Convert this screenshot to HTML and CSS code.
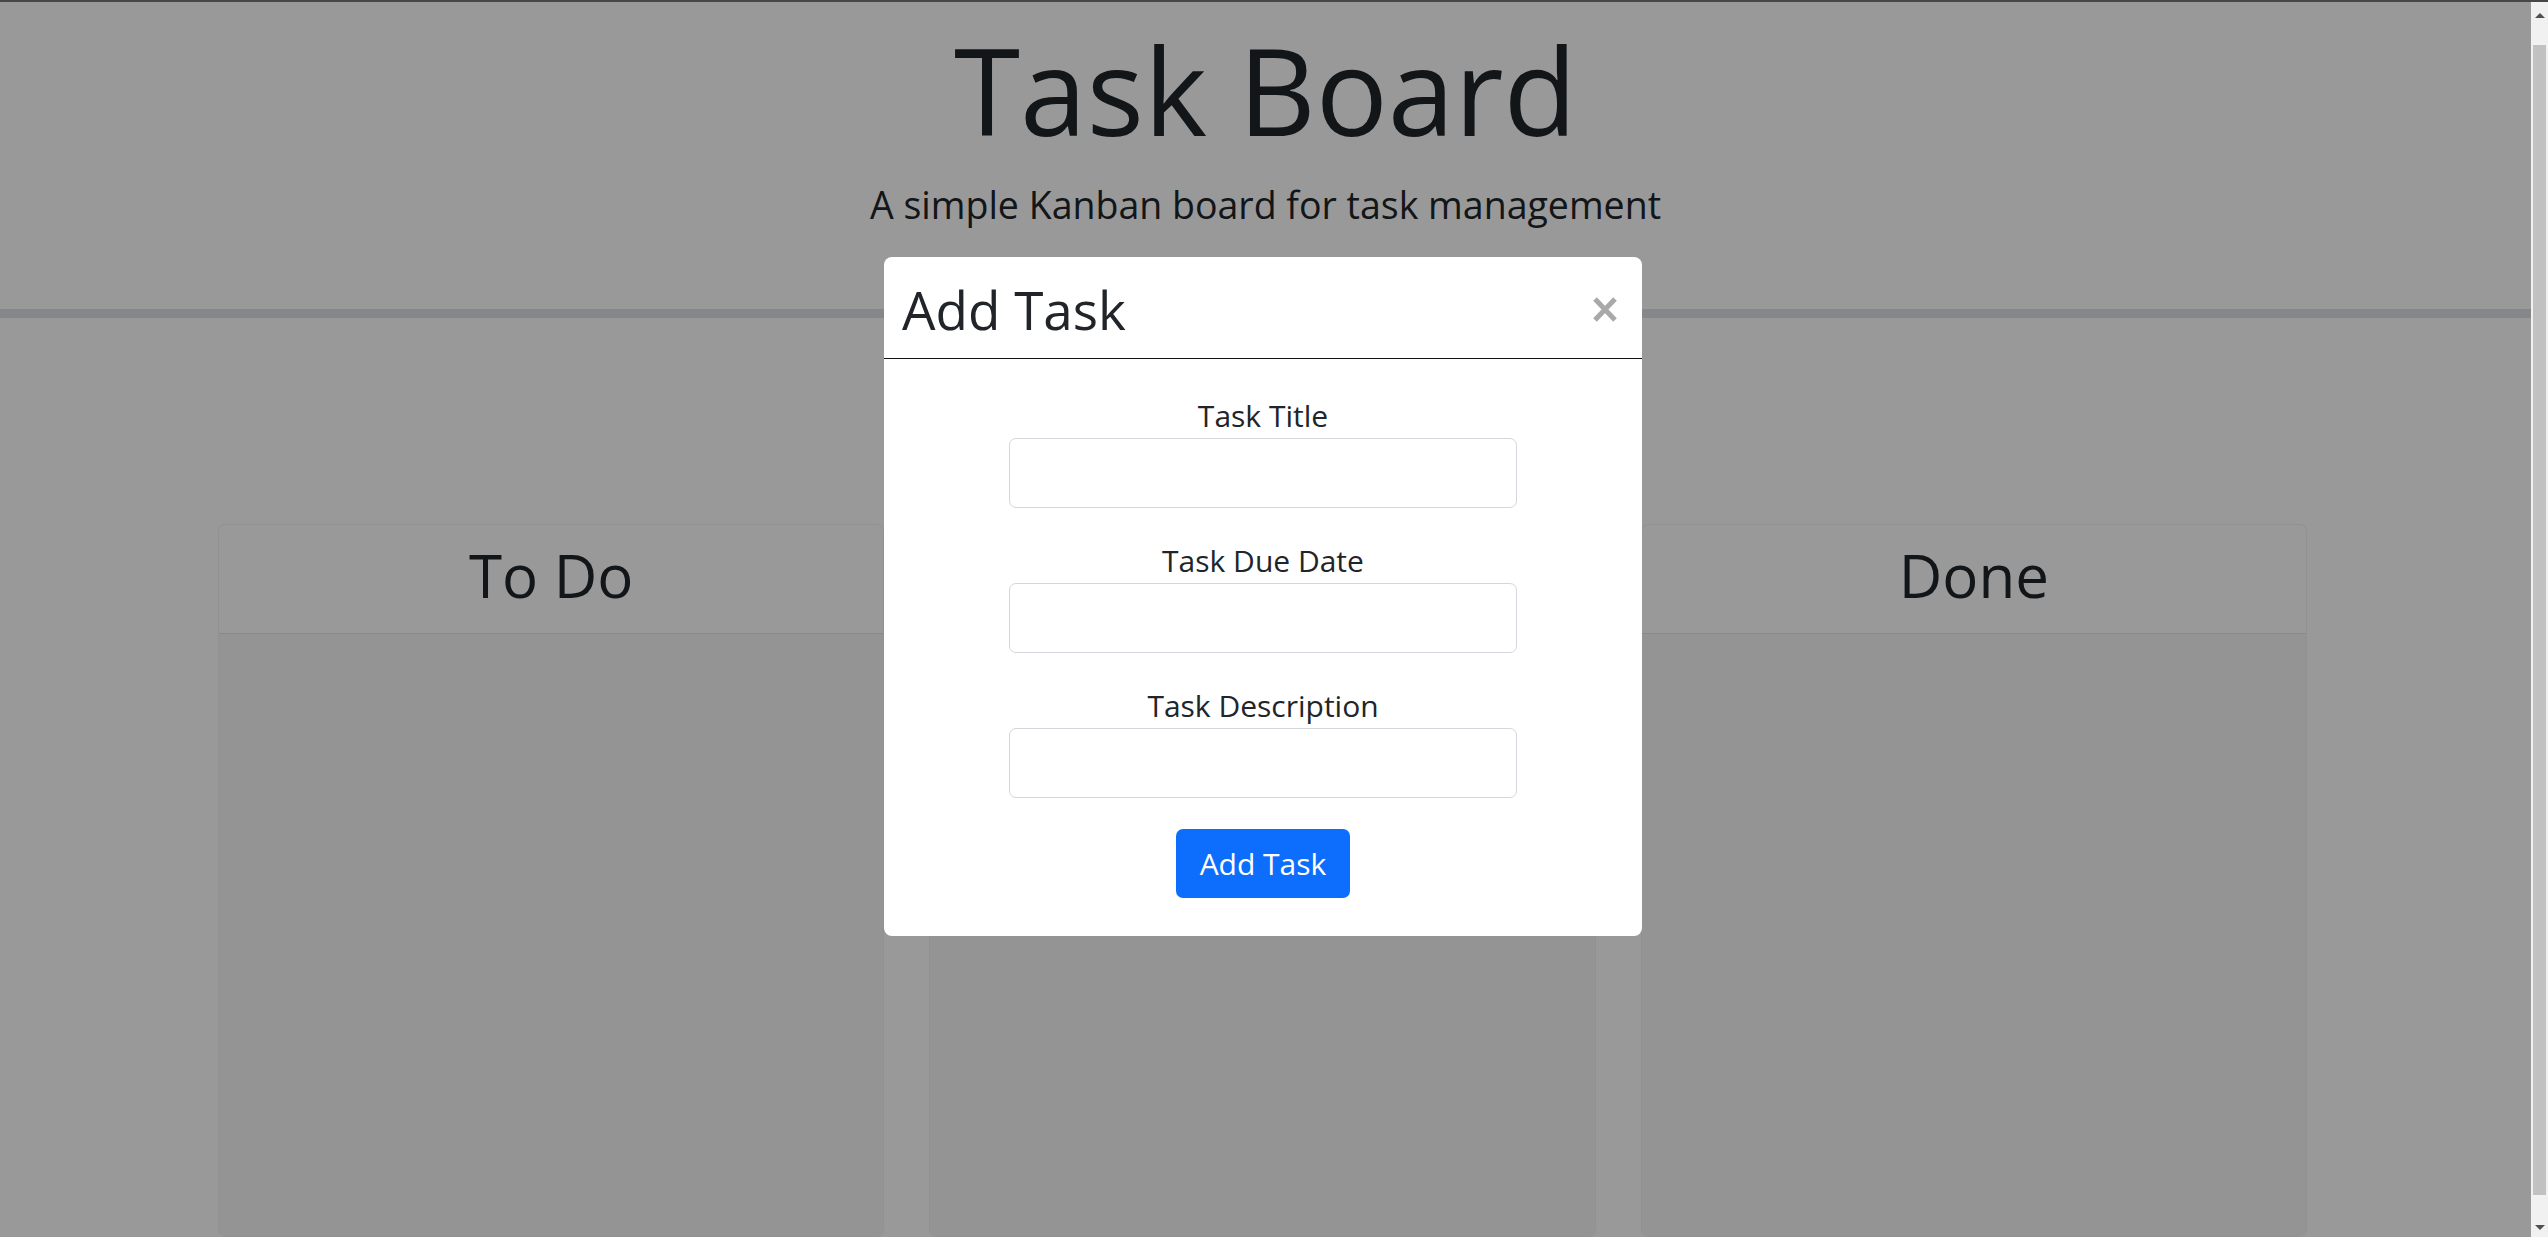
FILE: index.html
```html
<!DOCTYPE html>
<html lang="en">
<head>
<meta charset="utf-8">
<title>Task Board</title>
<link rel="stylesheet" href="styles.css">
</head>
<body>
<div class="window-line"></div>
<div class="window">
  <div class="page">
    <header class="site-header">
      <h1 class="site-title">Task Board</h1>
      <p class="site-subtitle">A simple Kanban board for task management</p>
    </header>
    <main class="board">
      <section class="lane">
        <div class="lane-header"><h2 class="lane-title">To Do</h2></div>
        <div class="lane-body"></div>
      </section>
      <section class="lane">
        <div class="lane-header"><h2 class="lane-title">In Progress</h2></div>
        <div class="lane-body"></div>
      </section>
      <section class="lane">
        <div class="lane-header"><h2 class="lane-title">Done</h2></div>
        <div class="lane-body"></div>
      </section>
    </main>
    <div class="backdrop"></div>
    <div class="modal">
      <div class="modal-header">
        <h2 class="modal-title">Add Task</h2>
        <button class="modal-close" type="button" aria-label="Close">
          <svg width="26" height="25" viewBox="0 0 26 25"><path d="M3 2 L23 23 M23 2 L3 23" stroke="#a9a9a9" stroke-width="5" fill="none"/></svg>
        </button>
      </div>
      <form class="modal-body">
        <div class="field">
          <label class="field-label" for="title">Task Title</label>
          <input class="field-input" id="title" type="text">
        </div>
        <div class="field">
          <label class="field-label" for="due">Task Due Date</label>
          <input class="field-input" id="due" type="text">
        </div>
        <div class="field">
          <label class="field-label" for="desc">Task Description</label>
          <input class="field-input" id="desc" type="text">
        </div>
        <button class="btn-primary" type="button">Add Task</button>
      </form>
    </div>
  </div>
  <div class="scrollbar">
    <div class="sb-arrow sb-up"></div>
    <div class="sb-thumb"></div>
    <div class="sb-track"></div>
    <div class="sb-arrow sb-down"></div>
  </div>
</div>
</body>
</html>
```
FILE: styles.css
```css
* { box-sizing: border-box; }
html, body {
  margin: 0;
  height: 100%;
  overflow: hidden;
}
body {
  display: flex;
  flex-direction: column;
  font-family: "Open Sans", "Noto Sans", sans-serif;
  color: #212529;
  background: #fff;
}
.window-line {
  height: 2px;
  background: #474747;
  flex: none;
}
.window {
  flex: 1;
  display: flex;
  min-height: 0;
}
.page {
  flex: 1;
  position: relative;
  overflow: hidden;
  background: #fff;
}
.site-header {
  text-align: center;
  padding: 15px 0 78px;
  border-bottom: 9px solid #dee2e6;
}
.site-title {
  margin: 0;
  font-size: 120px;
  font-weight: 400;
  line-height: 146px;
}
.site-subtitle {
  margin: 16px 0 0;
  font-size: 37.5px;
  line-height: 52px;
}
.board {
  width: 2089px;
  margin: 206px 0 0 218px;
  display: grid;
  grid-template-columns: repeat(3, 1fr);
  gap: 45px;
}
.lane {
  border: 1px solid #f2f2f2;
  border-radius: 7px;
  background: #fff;
  display: flex;
  flex-direction: column;
}
.lane-header {
  padding: 14px 0 22px;
  text-align: center;
  border-bottom: 1px solid #e4e4e4;
}
.lane-title {
  margin: 0;
  font-size: 60px;
  font-weight: 400;
  line-height: 72px;
}
.lane-body {
  height: 602px;
  background: #f7f7f7;
  border-radius: 0 0 7px 7px;
}
.backdrop {
  position: absolute;
  inset: 0;
  background: rgba(0, 0, 0, 0.4);
}
.modal {
  position: absolute;
  top: 255px;
  left: 884px;
  width: 758px;
  background: #fff;
  border-radius: 8px;
}
.modal-header {
  display: flex;
  align-items: center;
  justify-content: space-between;
  padding: 19px 24px 15px 18px;
  border-bottom: 1px solid #111;
}
.modal-title {
  margin: 0;
  font-size: 53px;
  font-weight: 400;
  line-height: 67px;
}
.modal-close {
  border: 0;
  background: none;
  padding: 0;
  width: 26px;
  height: 25px;
  display: flex;
}
.modal-body {
  display: flex;
  flex-direction: column;
  align-items: center;
  padding: 35px 0 38px;
  margin: 0;
}
.field {
  display: flex;
  flex-direction: column;
  align-items: center;
  margin-bottom: 31px;
}
.field-label {
  font-size: 30px;
  line-height: 44px;
}
.field-input {
  width: 508px;
  height: 70px;
  border: 1px solid #d3d7db;
  border-radius: 7px;
  background: #fff;
  font: inherit;
}
.btn-primary {
  font-family: inherit;
  font-size: 30px;
  line-height: 43px;
  color: #fff;
  background: #0d6efd;
  border: 0;
  border-radius: 7px;
  width: 174px;
  height: 69px;
  padding: 0;
}
.scrollbar {
  width: 17px;
  flex: none;
  background: #f1f1f1;
  display: flex;
  flex-direction: column;
  align-items: center;
}
.sb-arrow {
  width: 0;
  height: 0;
  flex: none;
  border-left: 5px solid transparent;
  border-right: 5px solid transparent;
}
.sb-up {
  margin: 11px 0 27px;
  border-bottom: 5px solid #505050;
}
.sb-thumb {
  width: 13px;
  height: 1150px;
  background: #c1c1c1;
  flex: none;
}
.sb-track { flex: 1; }
.sb-down {
  margin: 0 0 7px;
  border-top: 5px solid #505050;
}
```
